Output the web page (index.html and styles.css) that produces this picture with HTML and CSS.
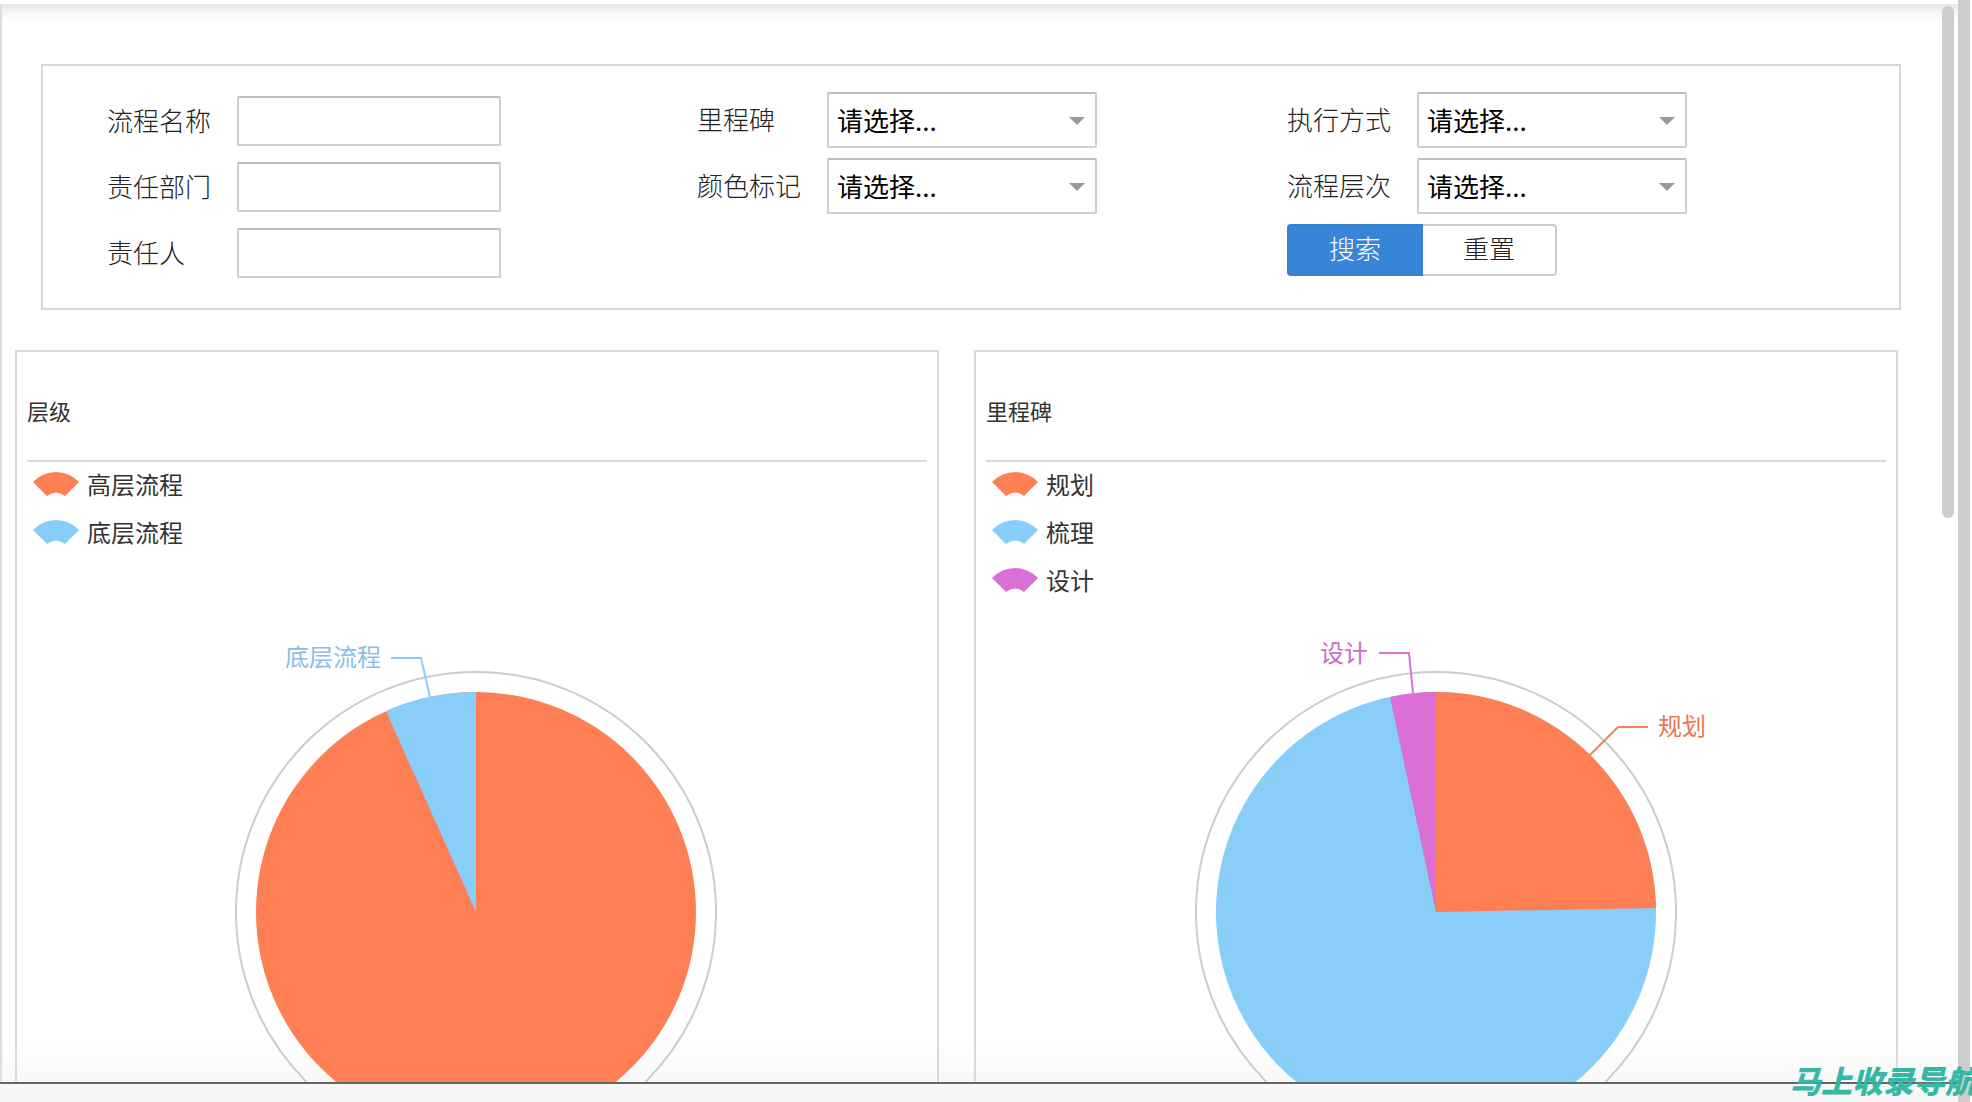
FILE: index.html
```html
<!DOCTYPE html>
<html lang="zh-CN">
<head>
<meta charset="utf-8">
<title>流程统计</title>
<meta name="viewport" content="width=device-width, initial-scale=1">
<link rel="stylesheet" href="styles.css">
</head>
<body>
<div class="window">
  <div class="viewport">
    <main class="content">
      <form class="search">
        <div class="search-col search-col-inputs">
          <div class="field"><label for="name">流程名称</label><input id="name" type="text"></div>
          <div class="field"><label for="dept">责任部门</label><input id="dept" type="text"></div>
          <div class="field"><label for="owner">责任人</label><input id="owner" type="text"></div>
        </div>
        <div class="search-col">
          <div class="field"><label for="milestone">里程碑</label><span class="select"><select id="milestone"><option>请选择...</option></select></span></div>
          <div class="field"><label for="color">颜色标记</label><span class="select"><select id="color"><option>请选择...</option></select></span></div>
        </div>
        <div class="search-col">
          <div class="field"><label for="mode">执行方式</label><span class="select"><select id="mode"><option>请选择...</option></select></span></div>
          <div class="field"><label for="level">流程层次</label><span class="select"><select id="level"><option>请选择...</option></select></span></div>
          <div class="actions"><button class="btn btn-primary" type="submit">搜索</button><button class="btn" type="reset">重置</button></div>
        </div>
      </form>

      <div class="cards">
        <section class="card">
          <h2>层级</h2>
          <div class="chart">
            <ul class="legend">
              <li><svg class="fan orange" viewBox="0 0 46 24"><path d="M0 10Q10 0 23 0Q36 0 46 10L32 24Q23 17 14 24Z"/></svg>高层流程</li>
              <li><svg class="fan blue" viewBox="0 0 46 24"><path d="M0 10Q10 0 23 0Q36 0 46 10L32 24Q23 17 14 24Z"/></svg>底层流程</li>
            </ul>
            <svg class="pie" viewBox="0 0 900 720" preserveAspectRatio="xMidYMin meet">
              <circle class="ring" cx="449" cy="450" r="240"/>
              <circle class="orange" cx="449" cy="450" r="220"/>
              <path class="blue" d="M449 450L359 249A220 220 0 0 1 449 230Z"/>
              <path class="leader blue-line" d="M403 235L394 196H364"/>
              <text class="blue-text" x="354" y="204" text-anchor="end">底层流程</text>
            </svg>
          </div>
        </section>
        <section class="card">
          <h2>里程碑</h2>
          <div class="chart">
            <ul class="legend">
              <li><svg class="fan orange" viewBox="0 0 46 24"><path d="M0 10Q10 0 23 0Q36 0 46 10L32 24Q23 17 14 24Z"/></svg>规划</li>
              <li><svg class="fan blue" viewBox="0 0 46 24"><path d="M0 10Q10 0 23 0Q36 0 46 10L32 24Q23 17 14 24Z"/></svg>梳理</li>
              <li><svg class="fan purple" viewBox="0 0 46 24"><path d="M0 10Q10 0 23 0Q36 0 46 10L32 24Q23 17 14 24Z"/></svg>设计</li>
            </ul>
            <svg class="pie" viewBox="0 0 900 720" preserveAspectRatio="xMidYMin meet">
              <circle class="ring" cx="450" cy="450" r="240"/>
              <circle class="blue" cx="450" cy="450" r="220"/>
              <path class="orange" d="M450 450V230A220 220 0 0 1 670 446Z"/>
              <path class="purple" d="M450 450L404 235A220 220 0 0 1 450 230Z"/>
              <path class="leader purple-line" d="M427 231L423 191H393"/>
              <path class="leader orange-line" d="M604 293L632 265H662"/>
              <text class="purple-text" x="382" y="200" text-anchor="end">设计</text>
              <text class="orange-text" x="672" y="273">规划</text>
            </svg>
          </div>
        </section>
      </div>
    </main>
    <div class="thumb"></div>
  </div>
  <footer class="bottom-bar"></footer>
</div>
<div class="outer-scroll"></div>
<div class="watermark">马上收录导航</div>
</body>
</html>
```
FILE: styles.css
```css
* { box-sizing: border-box; }

body {
  margin: 0;
  height: 100vh;
  display: flex;
  position: relative;
  overflow: hidden;
  background: #fff;
  color: #333;
  font-family: "Noto Sans CJK SC", sans-serif;
  font-size: 26px;
}

.window {
  flex: 1;
  min-width: 0;
  display: flex;
  flex-direction: column;
  padding-top: 4px;
  background: linear-gradient(#fff 94%, #f5f5f5);
}

.viewport {
  flex: 1;
  min-height: 0;
  display: flex;
  overflow: hidden;
  background: linear-gradient(#e6e6e6, #f6f6f6 8px, rgba(255, 255, 255, 0) 18px);
}

.content {
  flex: 1;
  min-width: 0;
  border-left: 2px solid #ddd;
}

.thumb {
  width: 12px;
  height: 512px;
  margin: 2px 4px 0 0;
  border-radius: 6px;
  background: #cdcdcd;
}

.bottom-bar {
  height: 20px;
  border-top: 2px solid #666;
}

.outer-scroll {
  width: 12px;
  margin-right: 2px;
  background: #cdcdcd;
}

/* Search panel */
.search {
  display: grid;
  grid-template-columns: repeat(3, 1fr);
  margin: 60px 41px 40px 39px;
  padding: 26px 22px 30px 64px;
  border: 2px solid #d8d8d8;
}

.search-col {
  display: flex;
  flex-direction: column;
  gap: 10px;
}

.search-col-inputs {
  gap: 16px;
  padding-top: 4px;
}

.field {
  display: flex;
  align-items: center;
}

.field label {
  width: 130px;
  padding-bottom: 4px;
  color: #222;
  font-weight: 300;
}

.field input,
.field select {
  border: 2px solid #d0d0d0;
  border-top-color: #bebebe;
  border-radius: 2px;
  background: #fff;
  font: inherit;
}

.field input {
  width: 264px;
  height: 50px;
  padding: 0 8px;
}

.select {
  position: relative;
  width: 270px;
}

.field select {
  display: block;
  appearance: none;
  width: 100%;
  height: 56px;
  padding: 0 8px 2px;
  color: #000;
}

.select::after {
  content: "";
  position: absolute;
  top: 25px;
  right: 12px;
  border: 8px solid transparent;
  border-top-color: #999;
  border-bottom: 0;
  pointer-events: none;
}

.actions {
  display: flex;
}

.btn {
  height: 52px;
  width: 134px;
  padding: 0 0 4px;
  border: 2px solid #ccc;
  border-left: 0;
  border-radius: 0 4px 4px 0;
  background: #fff;
  color: #222;
  font: inherit;
  font-weight: 300;
  line-height: 44px;
}

.btn-primary {
  width: 136px;
  border: 2px solid #3680d0;
  border-radius: 4px 0 0 4px;
  background: #3884d8;
  color: #fff;
}

/* Chart cards */
.cards {
  display: grid;
  grid-template-columns: repeat(2, minmax(0, 1fr));
  gap: 35px;
  margin: 0 44px 0 13px;
}

.card {
  padding: 0 10px;
  border: 2px solid #dadada;
}

.card h2 {
  margin: 0;
  padding: 42px 0 34px;
  border-bottom: 2px solid #dadada;
  font-size: 22px;
  font-weight: 400;
  line-height: 32px;
}

.chart {
  display: grid;
}

.legend,
.pie {
  grid-area: 1 / 1;
}

.legend {
  margin: 0;
  padding: 0 6px;
  list-style: none;
  font-size: 24px;
  line-height: 44px;
}

.legend li {
  display: flex;
  align-items: center;
  gap: 8px;
  margin-bottom: 4px;
}

.fan {
  width: 46px;
  height: 24px;
}

.pie {
  width: 100%;
  font-size: 24px;
}

.ring {
  fill: none;
  stroke: #ccc;
  stroke-width: 2;
}

.leader {
  fill: none;
  stroke-width: 2;
}

.orange { fill: #ff7f55; }
.blue { fill: #89cdf9; }
.purple { fill: #da70d6; }
.orange-line { stroke: #ff7f55; }
.blue-line { stroke: #89cdf9; }
.purple-line { stroke: #da70d6; }
.orange-text { fill: #e8784f; }
.blue-text { fill: #87c0e4; }
.purple-text { fill: #c96cc6; }

.watermark {
  position: absolute;
  right: -4px;
  bottom: 6px;
  color: #2cb5a3;
  font-size: 31px;
  font-style: italic;
  font-weight: 900;
  line-height: 32px;
  white-space: nowrap;
  opacity: 0.95;
}
```
